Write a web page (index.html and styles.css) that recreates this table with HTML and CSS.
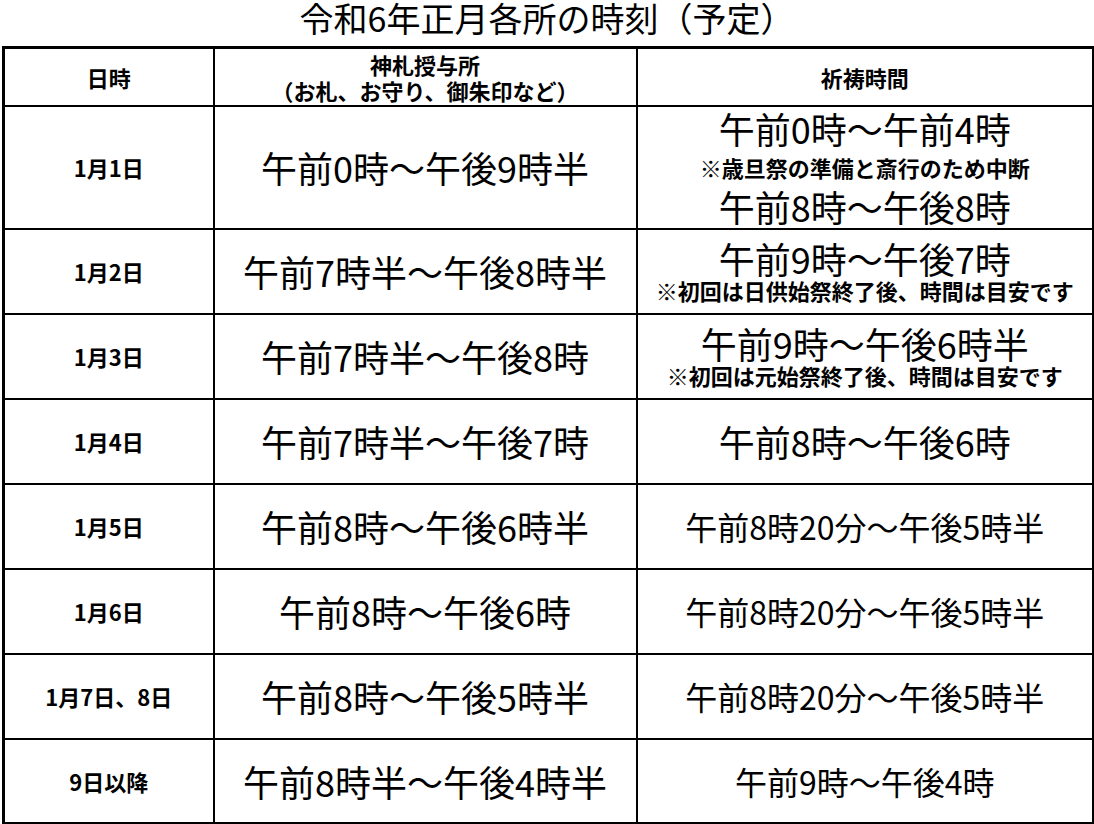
FILE: index.html
```html
<!DOCTYPE html>
<html lang="ja">
<head>
<meta charset="utf-8">
<title>令和6年正月各所の時刻（予定）</title>
<link rel="stylesheet" href="styles.css">
</head>
<body>
<div class="page">
  <h1 class="title">令和6年正月各所の時刻（予定）</h1>
  <table class="schedule">
    <colgroup>
      <col class="c-date">
      <col class="c-office">
      <col class="c-prayer">
    </colgroup>
    <thead>
      <tr class="row-head">
        <th>日時</th>
        <th><span class="hl">神札授与所</span><span class="hl">（お札、お守り、御朱印など）</span></th>
        <th>祈祷時間</th>
      </tr>
    </thead>
    <tbody>
      <tr class="row-first">
        <td class="date">1月1日</td>
        <td class="big">午前0時～午後9時半</td>
        <td>
          <div class="big">午前0時～午前4時</div>
          <div class="note note-mid">※歳旦祭の準備と斎行のため中断</div>
          <div class="big">午前8時～午後8時</div>
        </td>
      </tr>
      <tr class="row">
        <td class="date">1月2日</td>
        <td class="big">午前7時半～午後8時半</td>
        <td>
          <div class="big tight">午前9時～午後7時</div>
          <div class="note">※初回は日供始祭終了後、時間は目安です</div>
        </td>
      </tr>
      <tr class="row">
        <td class="date">1月3日</td>
        <td class="big">午前7時半～午後8時</td>
        <td>
          <div class="big tight">午前9時～午後6時半</div>
          <div class="note">※初回は元始祭終了後、時間は目安です</div>
        </td>
      </tr>
      <tr class="row">
        <td class="date">1月4日</td>
        <td class="big">午前7時半～午後7時</td>
        <td class="big">午前8時～午後6時</td>
      </tr>
      <tr class="row">
        <td class="date">1月5日</td>
        <td class="big">午前8時～午後6時半</td>
        <td class="mid">午前8時20分～午後5時半</td>
      </tr>
      <tr class="row">
        <td class="date">1月6日</td>
        <td class="big">午前8時～午後6時</td>
        <td class="mid">午前8時20分～午後5時半</td>
      </tr>
      <tr class="row">
        <td class="date">1月7日、8日</td>
        <td class="big">午前8時～午後5時半</td>
        <td class="mid">午前8時20分～午後5時半</td>
      </tr>
      <tr class="row">
        <td class="date">9日以降</td>
        <td class="big">午前8時半～午後4時半</td>
        <td class="mid">午前9時～午後4時</td>
      </tr>
    </tbody>
  </table>
</div>
</body>
</html>
```

FILE: styles.css
```css
html, body {
  margin: 0;
  padding: 0;
  background: #fff;
}

body {
  font-family: "Noto Sans CJK JP", "Noto Sans", sans-serif;
  color: #000;
}

.page {
  width: 1094px;
}

.title {
  margin: 0;
  padding: 0 0 10px 0;
  font-size: 34px;
  line-height: 36px;
  font-weight: 400;
  text-align: center;
}

.schedule {
  margin-left: 2px;
  width: 1090px;
  border-collapse: collapse;
  table-layout: fixed;
  border: 3px solid #000;
}

.c-date { width: 210px; }
.c-office { width: 423px; }
.c-prayer { width: 457px; }

.schedule th,
.schedule td {
  border: 2px solid #000;
  padding: 0;
  text-align: center;
  vertical-align: middle;
}

.schedule th {
  font-size: 22px;
  font-weight: 700;
  line-height: 26px;
}

.hl {
  display: block;
}

.row-head { height: 58px; }
.row-first { height: 123px; }
.row { height: 85px; }

.date {
  font-size: 22px;
  font-weight: 700;
}

.big {
  font-size: 36px;
  line-height: 40px;
  font-weight: 400;
}

.big.tight {
  line-height: 38px;
}

.mid {
  font-size: 32px;
  font-weight: 400;
}

.note {
  font-size: 22px;
  line-height: 26px;
  font-weight: 700;
}

.note-mid {
  line-height: 38px;
}
```
